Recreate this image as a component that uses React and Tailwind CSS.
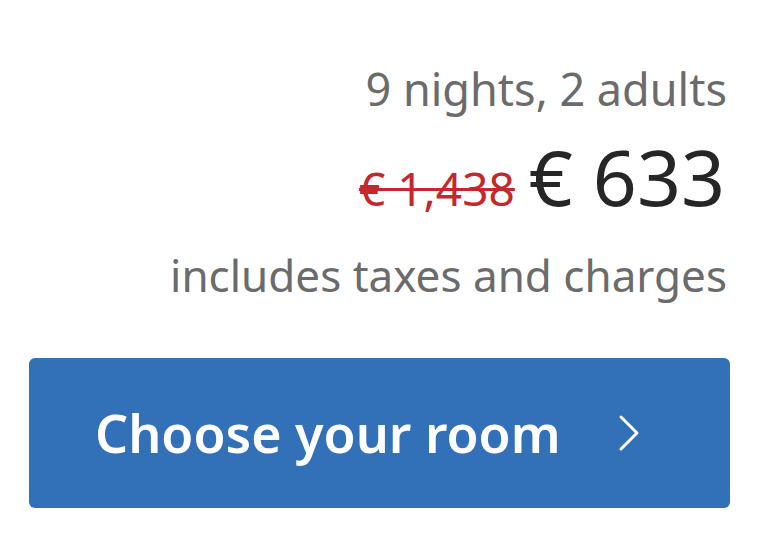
export default function App() {
  return (
    <div
      className="w-[762px] h-[542px] bg-white flex flex-col items-end pt-[60px] pl-[29px] pr-[32px]"
      style={{ fontFamily: '"Noto Sans", "Open Sans", sans-serif' }}
    >
      <p className="text-[45px] leading-[58px] text-[#6b6b6b] pr-[3px]">9 nights, 2 adults</p>

      <div className="flex items-baseline gap-[14px] mt-[17px] pr-[5px]">
        <span className="text-[46px] leading-[58px] text-[#c4282c] line-through decoration-[3px]">€ 1,438</span>
        <span className="text-[77px] leading-[84px] text-[#262626]">€ 633</span>
      </div>

      <p className="text-[44px] leading-[58px] text-[#6b6b6b] mt-[27px] pr-[3px]">includes taxes and charges</p>

      <button className="mt-[54px] w-full h-[150px] rounded-[6px] bg-[#3270b8] text-white flex items-center pl-[66px] pr-[90px] justify-between">
        <span className="text-[52px] font-semibold leading-none">Choose your room</span>
        <svg width="22" height="38" viewBox="0 0 22 38" fill="none" stroke="currentColor" strokeWidth="3" strokeLinecap="round" strokeLinejoin="round">
          <path d="M3 3 L19 19 L3 35" />
        </svg>
      </button>
    </div>
  );
}
